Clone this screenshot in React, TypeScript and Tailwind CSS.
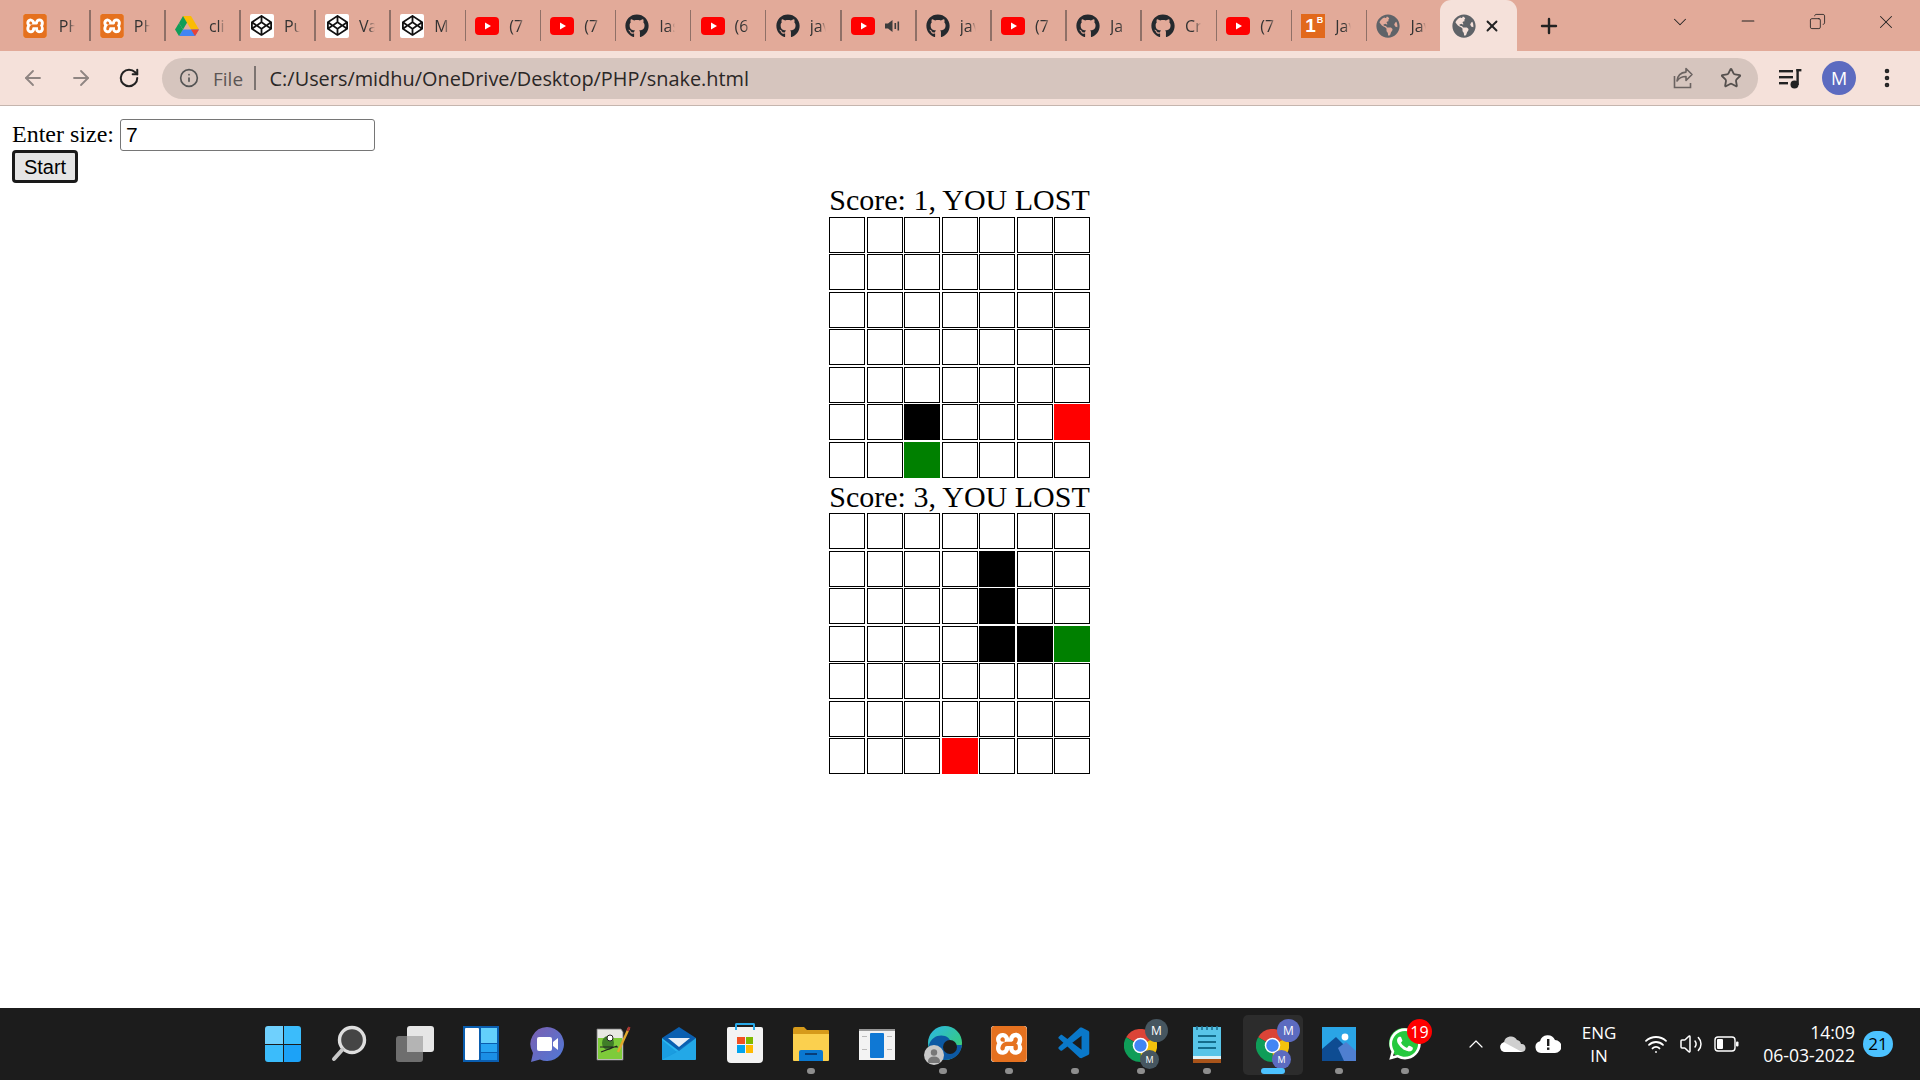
import { ArrowLeft, ArrowRight, RotateCw, Info, Star, Plus, X, Minus, ChevronDown, ChevronUp, Wifi, Volume2, EllipsisVertical, Copy } from 'lucide-react'
import { FaGithub, FaGlobeAmericas, FaWhatsapp, FaCodepen } from 'react-icons/fa'
import { SiXampp } from 'react-icons/si'
import { VscVscode } from 'react-icons/vsc'
import type { ReactNode } from 'react'

const uiFont = "[font-family:'Open_Sans',sans-serif]"

function Xampp({ size = 24 }: { size?: number }) {
  return (
    <span className="flex items-center justify-center rounded-[3px] bg-white" style={{ width: size, height: size }}>
      <SiXampp size={size} color="#e5711f" />
    </span>
  )
}

function Drive() {
  return (
    <svg width="24" height="24" viewBox="0 0 24 24">
      <polygon points="8,2 16,2 8,15.5 4,9" fill="#0f9d58" />
      <polygon points="8,2 16,2 24,15.5 16,15.5" fill="#fbbc04" />
      <polygon points="8,15.5 24,15.5 20,22 4,22" fill="#4285f4" />
      <polygon points="8,15.5 4,22 0,15.5 4,9" fill="#0f9d58" />
      <polygon points="24,15.5 20,22 16,15.5" fill="#ea4335" />
    </svg>
  )
}

function Codepen() {
  return (
    <span className="flex h-6 w-6 items-center justify-center rounded-[2px] bg-white">
      <FaCodepen size={21} color="#111" />
    </span>
  )
}

function Youtube() {
  return (
    <svg width="24" height="24" viewBox="0 0 24 24">
      <rect x="0" y="3" width="24" height="18" rx="4" fill="#ff0000" />
      <polygon points="10,8.5 16,12 10,15.5" fill="#fff" />
    </svg>
  )
}

function OneB() {
  return (
    <span className="relative flex h-6 w-6 items-center bg-[#e2691c] [font-family:'Liberation_Sans',sans-serif] font-bold text-white">
      <span className="pl-[4px] text-[19px] leading-none">1</span>
      <span className="absolute right-[2px] top-[2px] text-[9px] leading-none">B</span>
    </span>
  )
}

const github = <FaGithub size={24} color="#24292e" />
const youtube = <Youtube />
const codepen = <Codepen />
const globe = <FaGlobeAmericas size={24} color="#5f6368" />

const tabs: { icon: ReactNode; title?: string; audio?: boolean }[] = [
  { icon: <Xampp />, title: 'PHP' },
  { icon: <Xampp />, title: 'PHP' },
  { icon: <Drive />, title: 'cli' },
  { icon: codepen, title: 'Pu' },
  { icon: codepen, title: 'Va' },
  { icon: codepen, title: 'M' },
  { icon: youtube, title: '(7' },
  { icon: youtube, title: '(7' },
  { icon: github, title: 'las' },
  { icon: youtube, title: '(6' },
  { icon: github, title: 'jav' },
  { icon: youtube, audio: true },
  { icon: github, title: 'jav' },
  { icon: youtube, title: '(7' },
  { icon: github, title: 'Ja' },
  { icon: github, title: 'Cr' },
  { icon: youtube, title: '(7' },
  { icon: <OneB />, title: 'Jav' },
  { icon: globe, title: 'Jav' },
]

function Tab({ icon, title, audio, first, last }: { icon: ReactNode; title?: string; audio?: boolean; first: boolean; last: boolean }) {
  return (
    <div className="flex h-full w-[75.1px] shrink-0 items-center">
      <div className="flex h-[31px] w-full items-center gap-[10px] pl-[9.2px]">
        <span className={`relative flex h-6 w-6 shrink-0 items-center justify-center ${first ? '-left-[2px]' : ''}`}>{icon}</span>
        {audio ? (
          <svg width="16" height="16" viewBox="0 0 16 16" className="-ml-[1px]">
            <path d="M1 5.5h3L8.5 2v12L4 10.5H1z" fill="#3c3c3c" />
            <rect x="10.5" y="5" width="1.6" height="6" fill="#3c3c3c" />
            <rect x="13.5" y="3.5" width="1.6" height="9" fill="#3c3c3c" />
          </svg>
        ) : (
          <span className="w-[16px] overflow-hidden whitespace-nowrap text-[16px] text-[#333] [mask-image:linear-gradient(to_right,black_60%,transparent)]">
            {title}
          </span>
        )}
      </div>
      {!last && <span className="h-[31px] w-[1.5px] shrink-0 bg-[#8f7067]" />}
    </div>
  )
}

function TabStrip() {
  return (
    <div className="flex h-[51px] items-stretch bg-[#e2aa99] pl-[15.5px]">
      <div className="flex">
        {tabs.map((t, i) => (
          <Tab key={i} icon={t.icon} title={t.title} audio={t.audio} first={i === 0} last={i === tabs.length - 1} />
        ))}
      </div>
      <div className="ml-[-2px] flex h-full w-[77px] items-center gap-[7px] rounded-t-[11px] bg-[#f5e1da] pl-[12px]">
        {globe}
        <X size={18} strokeWidth={2.5} color="#222" />
      </div>
      <div className="flex w-[64px] items-center justify-center">
        <Plus size={24} strokeWidth={2.4} color="#222" />
      </div>
      <div className="flex flex-1 items-start pt-[11px] text-[#222]">
        <span className="ml-[81px] flex w-[36px] justify-center">
          <ChevronDown size={22} strokeWidth={1.1} />
        </span>
        <span className="ml-[32px] flex w-[36px] justify-center">
          <Minus size={20} strokeWidth={1.3} />
        </span>
        <span className="ml-[33px] flex h-[20px] w-[36px] items-center justify-center">
          <Copy size={17} strokeWidth={1.2} className="-scale-x-100" />
        </span>
        <span className="ml-[33px] flex w-[36px] justify-center">
          <X size={22} strokeWidth={1.1} />
        </span>
      </div>
    </div>
  )
}

function Toolbar() {
  return (
    <div className="flex h-[55px] items-center border-b border-[#c5b5ae] bg-[#f5e1da]">
      <div className="flex w-[162px] items-center gap-[24px] pl-[21px]">
        <ArrowLeft size={24} strokeWidth={1.8} color="#8f8582" />
        <ArrowRight size={24} strokeWidth={1.8} color="#8f8582" />
        <RotateCw size={22} strokeWidth={2.2} color="#222" className="ml-[1px]" />
      </div>
      <div className="flex h-[41px] w-[1596px] items-center rounded-full bg-[#d6c5be] pl-[17px] pr-[16px]">
        <Info size={20} strokeWidth={2} color="#555" />
        <span className="ml-[14px] translate-y-px text-[19px] text-[#5c5654]">File</span>
        <span className="ml-[11px] h-[24px] w-[1.5px] bg-[#7c7471]" />
        <span className="ml-[14px] translate-y-px text-[19.9px] text-[#2a2726]">C:/Users/midhu/OneDrive/Desktop/PHP/snake.html</span>
        <svg width="24" height="24" viewBox="0 0 24 24" fill="none" stroke="#6b6361" strokeWidth="1.6" className="ml-auto mr-[24px]">
          <path d="M20 8.5l-6-6v3.6C8.5 6.5 5.5 10 5 15c2-3 5-4.5 9-4.5v4z" strokeLinejoin="round" />
          <path d="M2.5 10v11.5h16V17" />
        </svg>
        <Star size={22} strokeWidth={2} color="#55504e" />
      </div>
      <div className="flex flex-1 items-center pl-[20px]">
        <svg width="24" height="22" viewBox="0 0 24 22" fill="#222">
          <rect x="1" y="3" width="14" height="2.4" />
          <rect x="1" y="9" width="14" height="2.4" />
          <rect x="1" y="15" width="9" height="2.4" />
          <rect x="18.4" y="2" width="2.4" height="16" />
          <rect x="18.4" y="2" width="5" height="2.4" />
          <circle cx="16.5" cy="17.5" r="4" />
        </svg>
        <span className="ml-[20px] flex h-[34px] w-[34px] items-center justify-center rounded-full bg-[#5c6bc0] text-[18px] text-white">M</span>
        <EllipsisVertical size={24} strokeWidth={2.6} color="#222" className="ml-[19px]" />
      </div>
    </div>
  )
}

type Mark = 'k' | 'r' | 'g'

function Board({ score, marks }: { score: number; marks: Record<string, Mark> }) {
  const fill: Record<Mark, string> = {
    k: 'bg-black border-black',
    r: 'bg-[#ff0000] border-[#ff0000]',
    g: 'bg-[#008000] border-[#008000]',
  }
  const cells = Array.from({ length: 49 }, (_, i) => marks[`${Math.floor(i / 7)},${i % 7}`])
  return (
    <>
      <div className="h-[35.7px] text-[30px] leading-[37px]">Score: {score}, YOU LOST</div>
      <div className="grid grid-cols-[repeat(7,36px)] grid-rows-[repeat(7,36px)] gap-[1.5px]">
        {cells.map((m, i) => (
          <div key={i} className={`border ${m ? fill[m] : 'border-black bg-white'}`} />
        ))}
      </div>
    </>
  )
}

function Page() {
  return (
    <div className="flex-1 bg-white pl-[12px] pt-[13px] [font-family:'Liberation_Serif',serif] text-black">
      <div className="flex h-[32px] items-center text-[24px]">
        <span className="-translate-y-[1px]">Enter size:</span>
        <div className="ml-[6px] flex h-[32px] w-[255px] items-center rounded-[3px] border border-[#767676] pl-[5px] [font-family:'Liberation_Sans',sans-serif] text-[21px]">
          7
        </div>
      </div>
      <button className="-mt-[1px] flex h-[33px] w-[66px] items-center justify-center rounded-[4px] border-[3px] border-[#1a1a1a] bg-[#e5e5e5] [font-family:'Liberation_Sans',sans-serif] text-[20px]">
        Start
      </button>
      <div className="-ml-[13px] -mt-[2px] flex flex-col items-center">
        <Board score={1} marks={{ '5,2': 'k', '5,6': 'r', '6,2': 'g' }} />
        <Board score={3} marks={{ '1,4': 'k', '2,4': 'k', '3,4': 'k', '3,5': 'k', '3,6': 'g', '6,3': 'r' }} />
      </div>
    </div>
  )
}

function ChromeIcon({ ring }: { ring: string }) {
  return (
    <span className="relative block h-[40px] w-[40px]">
      <svg width="33" height="33" viewBox="0 0 32 32" className="absolute left-[3px] top-[5px]">
        <path d="M16 16 L2.1 8 A16 16 0 0 1 29.9 8 Z" fill="#db4437" />
        <path d="M16 16 L29.9 8 A16 16 0 0 1 16 32 Z" fill="#f4c20d" />
        <path d="M16 16 L16 32 A16 16 0 0 1 2.1 8 Z" fill="#0f9d58" />
        <circle cx="16" cy="16" r="7.5" fill="#fff" />
        <circle cx="16" cy="16" r="6" fill="#4285f4" />
      </svg>
      <span className="absolute right-[-7px] top-[-5px] flex h-[23px] w-[23px] items-center justify-center rounded-full text-[12px] text-white" style={{ background: ring }}>M</span>
      <span className="absolute bottom-[-5px] left-[19px] flex h-[19px] w-[19px] items-center justify-center rounded-full text-[9px] text-white" style={{ background: ring }}>M</span>
    </span>
  )
}

const taskIcons: { icon: ReactNode; dot?: boolean; active?: boolean }[] = [
  {
    icon: (
      <span className="grid h-[36px] w-[36px] grid-cols-2 gap-[1px]">
        <span className="rounded-tl-[3px] bg-[#6fd0fd]" />
        <span className="rounded-tr-[3px] bg-[#3bbcfb]" />
        <span className="rounded-bl-[3px] bg-[#3bbcfb]" />
        <span className="rounded-br-[3px] bg-[#1ca2f7]" />
      </span>
    ),
  },
  {
    icon: (
      <svg width="36" height="38" viewBox="0 0 36 38">
        <circle cx="21" cy="15" r="12.5" fill="#454545" stroke="#dedede" strokeWidth="3.4" />
        <path d="M11.5 24.5L3 34" stroke="#c8c8c8" strokeWidth="4" strokeLinecap="round" />
      </svg>
    ),
  },
  {
    icon: (
      <span className="relative block h-[36px] w-[38px]">
        <span className="absolute left-0 top-[10px] h-[26px] w-[27px] rounded-[3px] bg-[#6e6e6e]" />
        <span className="absolute right-0 top-0 h-[26px] w-[27px] rounded-[3px] bg-[#e6e6e6]" />
        <span className="absolute left-[11px] top-[10px] h-[16px] w-[16px] bg-[#b4b4b4]" />
      </span>
    ),
  },
  {
    icon: (
      <span className="flex h-[36px] w-[36px] gap-[2px] bg-[#0a5eb0] p-[2px]">
        <span className="w-[14px] rounded-[1px] bg-white" />
        <span className="flex flex-1 flex-col gap-[1px]">
          <span className="flex-[2] bg-[#63d0fb]" />
          <span className="flex-1 bg-[#27a5f2]" />
          <span className="flex-1 bg-[#1b8fe6]" />
        </span>
      </span>
    ),
  },
  {
    icon: (
      <svg width="36" height="36" viewBox="0 0 36 36">
        <defs>
          <linearGradient id="chatGrad" x1="0" y1="0" x2="1" y2="1">
            <stop offset="0" stopColor="#7b5fb0" />
            <stop offset="1" stopColor="#4f79d8" />
          </linearGradient>
        </defs>
        <path d="M18 1a17 17 0 1 1-7 32.5L2 36l2-9A17 17 0 0 1 18 1z" fill="url(#chatGrad)" />
        <rect x="8" y="11" width="15" height="14" rx="2" fill="#fff" />
        <polygon points="24,16 29,12 29,24 24,20" fill="#fff" />
      </svg>
    ),
  },
  {
    icon: (
      <svg width="36" height="36" viewBox="0 0 36 36">
        <path d="M2 3h24l2 3v28H2z" fill="#e8e8e4" stroke="#777" strokeWidth="0.8" />
        <rect x="3" y="12" width="24" height="21" fill="#7ecb3a" />
        <ellipse cx="13" cy="17" rx="6" ry="7" fill="#3f7d28" />
        <circle cx="15" cy="12" r="3" fill="#fff" stroke="#222" />
        <path d="M5 21h18M6 26l16-6" stroke="#222" strokeWidth="1.2" />
        <path d="M23 26L34 2" stroke="#e2a72b" strokeWidth="2.4" />
        <path d="M32.5 5L34.5 1" stroke="#a33" strokeWidth="2.4" />
      </svg>
    ),
  },
  {
    icon: (
      <svg width="36" height="36" viewBox="0 0 36 36">
        <polygon points="18,1 35,12 18,26 1,12" fill="#0a5fb0" />
        <polygon points="7,12 29,12 18,21" fill="#e8eef6" />
        <path d="M1 12l17 13 17-13v21a1 1 0 0 1-1 1H2a1 1 0 0 1-1-1z" fill="#29b6f0" />
        <path d="M1 34V14l15 12z" fill="#1a9de0" />
        <path d="M35 34H2l16-11 17-11z" fill="#1a8fd8" opacity="0.35" />
      </svg>
    ),
  },
  {
    icon: (
      <span className="relative mt-[1px] block h-[36px] w-[36px] rounded-b-[4px] rounded-t-[2px] bg-[#f3f3f3]">
        <span className="absolute left-[8px] top-[-4px] h-[7px] w-[20px] rounded-t-[2px] border-[2px] border-b-0 border-[#29a9e8]" />
        <span className="absolute left-[10px] top-[10px] grid h-[16px] w-[16px] grid-cols-2 gap-[1px]">
          <span className="bg-[#f25022]" />
          <span className="bg-[#7fba00]" />
          <span className="bg-[#00a4ef]" />
          <span className="bg-[#ffb900]" />
        </span>
      </span>
    ),
  },
  {
    dot: true,
    icon: (
      <svg width="38" height="36" viewBox="0 0 38 36">
        <path d="M1 3a2 2 0 0 1 2-2h9l3 3h21a1 1 0 0 1 1 1v5H1z" fill="#d69a1a" />
        <path d="M1 8h36v26a1 1 0 0 1-1 1H2a1 1 0 0 1-1-1z" fill="#fbd04e" />
        <path d="M7 35v-9a2 2 0 0 1 2-2h20a2 2 0 0 1 2 2v9z" fill="#0a78d0" />
        <rect x="13" y="27" width="12" height="2" fill="#083d78" />
      </svg>
    ),
  },
  {
    icon: (
      <span className="flex h-[31px] w-[36px] justify-between border-t-[2px] border-[#999] bg-[#f3f3f3] px-[3px] py-[2px]">
        <span className="mt-[3px] h-[14px] w-[5px] border-y border-[#bbb]" />
        <span className="h-full w-[14px] rounded-[1px] bg-[#0f78d4]" />
        <span className="mt-[3px] h-[14px] w-[5px] border-y border-[#bbb]" />
      </span>
    ),
  },
  {
    dot: true,
    icon: (
      <span className="relative block h-[40px] w-[38px]">
        <svg width="36" height="40" viewBox="0 0 36 40" className="absolute right-0 top-0">
          <defs>
            <linearGradient id="edgeGrad" x1="0" y1="0" x2="1" y2="1">
              <stop offset="0" stopColor="#2bb6e8" />
              <stop offset="0.7" stopColor="#35c987" />
              <stop offset="1" stopColor="#7fdc5a" />
            </linearGradient>
          </defs>
          <circle cx="19" cy="19" r="17" fill="url(#edgeGrad)" />
          <path d="M3 21c2-8 10-11 16-9 5 2 7 6 5 9h12c-1 10-9 15-17 15C10 36 3 30 3 21z" fill="#0c59a4" />
          <circle cx="24" cy="23" r="7" fill="#1c1c1c" />
        </svg>
        <span className="absolute bottom-[-1px] left-0 flex h-[20px] w-[20px] items-center justify-center overflow-hidden rounded-full bg-[#c8c8c8]">
          <svg width="16" height="16" viewBox="0 0 16 16"><circle cx="8" cy="5.5" r="3.2" fill="#777" /><ellipse cx="8" cy="14" rx="6" ry="4.5" fill="#777" /></svg>
        </span>
      </span>
    ),
  },
  { dot: true, icon: <Xampp size={36} /> },
  { dot: true, icon: <VscVscode size={38} color="#0a78c9" /> },
  { dot: true, icon: <ChromeIcon ring="#465660" /> },
  {
    dot: true,
    icon: (
      <svg width="30" height="38" viewBox="0 0 30 38">
        <rect x="1" y="2" width="28" height="31" fill="#58c5e8" />
        <rect x="1" y="33" width="28" height="5" fill="#a9541a" />
        <path d="M1 31h28v3H1z" fill="#dff3f8" />
        <path d="M5 1v4M10 1v4M15 1v4M20 1v4M25 1v4" stroke="#1d6e8e" strokeWidth="1.6" />
        <path d="M6 11h18M6 17h18M6 23h18" stroke="#146d8c" strokeWidth="2.2" />
      </svg>
    ),
  },
  { dot: true, active: true, icon: <ChromeIcon ring="#5c6bc0" /> },
  {
    dot: true,
    icon: (
      <svg width="34" height="34" viewBox="0 0 34 34">
        <rect width="34" height="34" fill="#2aa5e6" />
        <circle cx="23" cy="10" r="3.4" fill="#fff" />
        <polygon points="0,34 0,22 14,10 34,30 34,34" fill="#0e4c92" />
        <polygon points="16,21 24,15 34,24 34,34 22,34" fill="#4f7fd0" />
      </svg>
    ),
  },
  {
    dot: true,
    icon: (
      <span className="relative block h-[36px] w-[36px]">
        <span className="absolute left-[2px] top-[2px] h-[30px] w-[30px] rounded-full bg-[#25c93e]" />
        <FaWhatsapp size={36} color="#fff" className="absolute left-0 top-0" />
        <span className="absolute right-[-9px] top-[-7px] flex h-[25px] w-[25px] items-center justify-center rounded-full bg-[#ff0000] text-[16px] text-white">19</span>
      </span>
    ),
  },
]

function Taskbar() {
  return (
    <div className={`flex h-[72px] items-center bg-[#1c1c1c] pl-[250px] text-white ${uiFont}`}>
      <div className="flex h-full">
        {taskIcons.map((t, i) => (
          <div key={i} className="relative flex h-full w-[66px] items-center justify-center">
            {t.active && <span className="absolute inset-x-[3px] top-[7px] bottom-[5px] rounded-[5px] bg-[#2c2c2c]" />}
            <span className="relative">{t.icon}</span>
            {t.dot && (
              <span className={`absolute bottom-[6px] h-[6px] rounded-full ${t.active ? 'w-[24px] bg-[#4cc2ff]' : 'w-[8px] bg-[#8e8e8e]'}`} />
            )}
          </div>
        ))}
      </div>
      <div className="ml-[26px] flex items-center">
        <ChevronUp size={24} strokeWidth={1.2} />
        <svg width="26" height="16" viewBox="0 0 26 16" className="ml-[12px]">
          <path d="M5 16a5 5 0 0 1-1-9.8A7 7 0 0 1 17 4a5 5 0 0 1 4 4 4 4 0 0 1 1 8z" fill="#cfcfcf" />
          <path d="M5 16a5 5 0 0 1-1-9.8L22 16z" fill="#ffffff" />
        </svg>
        <svg width="26" height="18" viewBox="0 0 26 18" className="ml-[9px]">
          <path d="M6 18a6 6 0 0 1-1-11.8A8 8 0 0 1 20 5a6.5 6.5 0 0 1 0 13z" fill="#fff" />
          <rect x="12" y="4" width="2.4" height="7" fill="#1c1c1c" />
          <rect x="12" y="12.5" width="2.4" height="2.4" fill="#1c1c1c" />
        </svg>
        <div className="ml-[17px] flex w-[42px] flex-col items-center text-[17px] leading-[23px]">
          <span>ENG</span>
          <span>IN</span>
        </div>
        <Wifi size={24} strokeWidth={1.8} className="ml-[24px]" />
        <Volume2 size={24} strokeWidth={1.5} className="ml-[11px]" />
        <svg width="25" height="16" viewBox="0 0 25 16" className="ml-[11px]">
          <rect x="1" y="1" width="20" height="14" rx="3" fill="none" stroke="#fff" strokeWidth="1.4" />
          <rect x="3" y="3" width="6" height="10" rx="1" fill="#fff" />
          <rect x="22" y="5.5" width="2.5" height="5" rx="1" fill="#fff" />
        </svg>
        <div className="ml-[16px] flex w-[100px] flex-col items-end text-[17.6px] leading-[23px]">
          <span>14:09</span>
          <span>06-03-2022</span>
        </div>
        <span className="ml-[8px] flex h-[26px] w-[30px] items-center justify-center rounded-full bg-[#4cc2ff] text-[17px] text-black">21</span>
      </div>
    </div>
  )
}

export default function App() {
  return (
    <div className={`flex h-[1080px] w-[1920px] flex-col overflow-hidden bg-white ${uiFont}`}>
      <TabStrip />
      <Toolbar />
      <Page />
      <Taskbar />
    </div>
  )
}
